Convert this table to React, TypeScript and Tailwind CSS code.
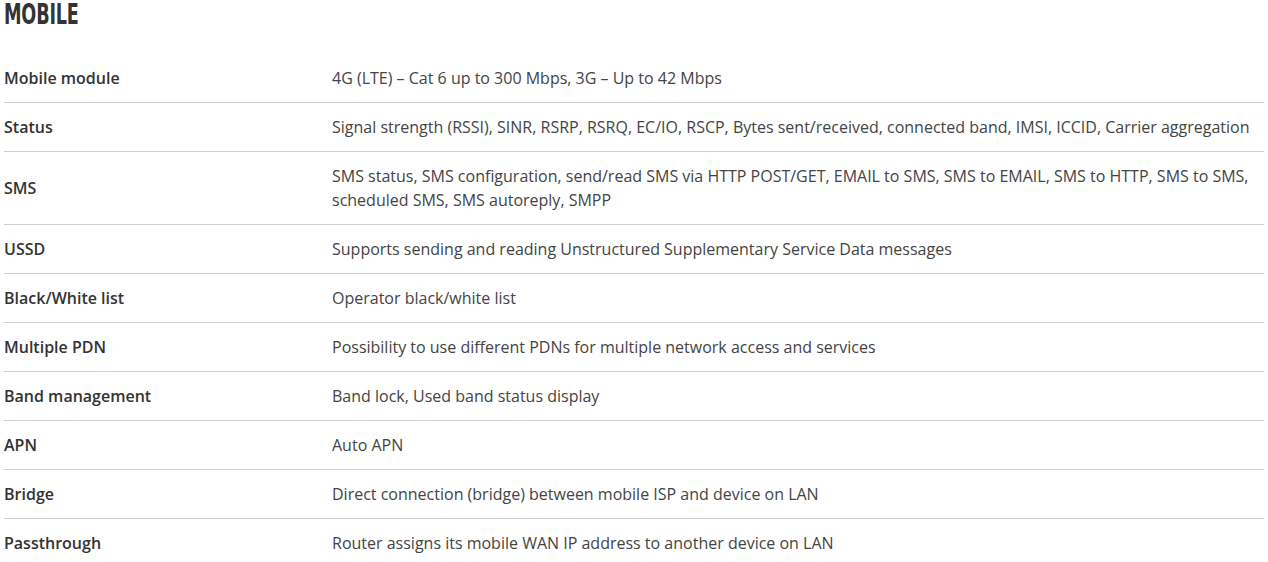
const rows: [string, string][] = [
  ['Mobile module', '4G (LTE) – Cat 6 up to 300 Mbps, 3G – Up to 42 Mbps'],
  ['Status', 'Signal strength (RSSI), SINR, RSRP, RSRQ, EC/IO, RSCP, Bytes sent/received, connected band, IMSI, ICCID, Carrier aggregation'],
  ['SMS', 'SMS status, SMS configuration, send/read SMS via HTTP POST/GET, EMAIL to SMS, SMS to EMAIL, SMS to HTTP, SMS to SMS, scheduled SMS, SMS autoreply, SMPP'],
  ['USSD', 'Supports sending and reading Unstructured Supplementary Service Data messages'],
  ['Black/White list', 'Operator black/white list'],
  ['Multiple PDN', 'Possibility to use different PDNs for multiple network access and services'],
  ['Band management', 'Band lock, Used band status display'],
  ['APN', 'Auto APN'],
  ['Bridge', 'Direct connection (bridge) between mobile ISP and device on LAN'],
  ['Passthrough', 'Router assigns its mobile WAN IP address to another device on LAN'],
];

export default function App() {
  return (
    <div className="bg-white min-h-screen px-[4px] text-[#333] font-['Open_Sans',sans-serif]">
      <h2 className="h-[54px]">
        <span className="inline-block origin-top-left scale-x-[0.63] font-['DejaVu_Sans',sans-serif] font-bold text-[28px] leading-[30px] tracking-[-0.3px] text-[#333]">
          MOBILE
        </span>
      </h2>
      <div className="w-[1260px]">
        {rows.map(([label, value]) => (
          <div key={label} className="flex border-b border-[#cfcfcf] py-[12px] text-[16px] leading-[24px]">
            <div className="w-[328px] shrink-0 flex items-center font-semibold text-[#333]">{label}</div>
            <div className="flex-1 text-[#444]">{value}</div>
          </div>
        ))}
      </div>
    </div>
  );
}
